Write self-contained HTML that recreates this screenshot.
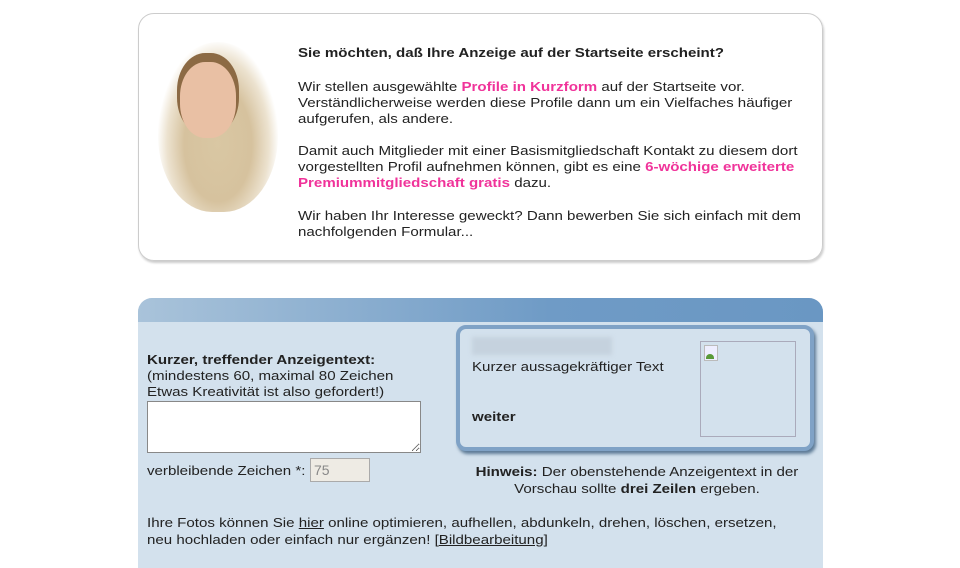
<!DOCTYPE html>
<html><head><meta charset="utf-8"><style>
body{margin:0;width:960px;height:561px;background:#fff;font-family:"Liberation Sans",Arial,sans-serif;font-size:13px;color:#222;position:relative;overflow:hidden}
.s{transform:scaleX(1.16);transform-origin:0 0}
.box{position:absolute;left:138px;top:13px;width:683px;height:246px;border:1px solid #ccc;border-radius:16px;box-shadow:1px 2px 2px #ccc}
.photo{position:absolute;left:158px;top:42px;width:120px;height:170px;border-radius:50% 50% 45% 45%;background:radial-gradient(ellipse at 50% 60%,#d9c7a3 0,#d6c29e 40%,#ece2cf 60%,#fff 72%)}
.face{position:absolute;left:180px;top:62px;width:56px;height:76px;border-radius:45%;background:#e9c0a4;box-shadow:0 -6px 0 3px #8c6a44}
.txt{position:absolute;left:298px;top:45px;width:440px;line-height:16px}
.txt p{margin:0 0 16px}
.pk{color:#f0339a;font-weight:bold}
.panel{position:absolute;left:138px;top:298px;width:685px;height:270px;background:#d3e1ed;border-radius:14px 14px 0 0;overflow:hidden}
.hdr{height:24px;background:linear-gradient(90deg,#a9c3da,#6f9bc6 60%,#6a97c3)}
.prev{position:absolute;left:318px;top:27px;width:350px;height:118px;border:4px solid #7fa2c6;border-radius:10px;box-shadow:2px 3px 3px #5c7a96;background:#d3e1ed}
textarea{position:absolute;left:9px;top:103px;width:272px;height:50px;border:1px solid #888;background:#fff;margin:0;padding:0}
</style></head><body>
<div class="box"></div>
<div class="photo"></div><div class="face"></div>
<div class="txt s">
<p style="margin-bottom:18px"><b>Sie möchten, daß Ihre Anzeige auf der Startseite erscheint?</b></p>
<p>Wir stellen ausgewählte <span class="pk">Profile in Kurzform</span> auf der Startseite vor.<br>Verständlicherweise werden diese Profile dann um ein Vielfaches häufiger<br>aufgerufen, als andere.</p>
<p>Damit auch Mitglieder mit einer Basismitgliedschaft Kontakt zu diesem dort<br>vorgestellten Profil aufnehmen können, gibt es eine <span class="pk">6-wöchige erweiterte<br>Premiummitgliedschaft gratis</span> dazu.</p>
<p style="margin-top:17px">Wir haben Ihr Interesse geweckt? Dann bewerben Sie sich einfach mit dem<br>nachfolgenden Formular...</p>
</div>
<div class="panel"><div class="hdr"></div>
<div class="s" style="position:absolute;left:9px;top:54px;line-height:16px;white-space:nowrap"><b>Kurzer, treffender Anzeigentext:</b><br>(mindestens 60, maximal 80 Zeichen<br>Etwas Kreativität ist also gefordert!)</div>
<textarea></textarea>
<div class="s" style="position:absolute;left:9px;top:165px">verbleibende Zeichen *:</div>
<div style="position:absolute;left:172px;top:160px;width:60px;height:24px;border:1px solid #aaa;background:#eeebe4;color:#888;line-height:22px;padding-left:3px;box-sizing:border-box;font-size:14px">75</div>
<div class="prev">
<div style="position:absolute;left:12px;top:8px;width:140px;height:18px;background:#c5d2de;filter:blur(2px)"></div>
<div class="s" style="position:absolute;left:12px;top:30px;white-space:nowrap">Kurzer aussagekräftiger Text</div>
<div class="s" style="position:absolute;left:12px;top:80px;font-weight:bold">weiter</div>
<div style="position:absolute;left:240px;top:12px;width:94px;height:94px;border:1px solid #aab"><div style="position:absolute;left:3px;top:3px;width:12px;height:14px;border:1px solid #bbb;background:#eef"></div><div style="position:absolute;left:5px;top:12px;width:8px;height:5px;background:#5a9a3a;border-radius:4px 4px 0 0"></div></div>
</div>
<div style="position:absolute;left:318px;top:165px;width:362px;line-height:17px"><div class="s" style="width:312px;text-align:center"><b>Hinweis:</b> Der obenstehende Anzeigentext in der<br>Vorschau sollte <b>drei Zeilen</b> ergeben.</div></div>
<div class="s" style="position:absolute;left:9px;top:216px;line-height:17px;white-space:nowrap">Ihre Fotos können Sie <u>hier</u> online optimieren, aufhellen, abdunkeln, drehen, löschen, ersetzen,<br>neu hochladen oder einfach nur ergänzen! [<u>Bildbearbeitung</u>]</div>
</div>
</body></html>
